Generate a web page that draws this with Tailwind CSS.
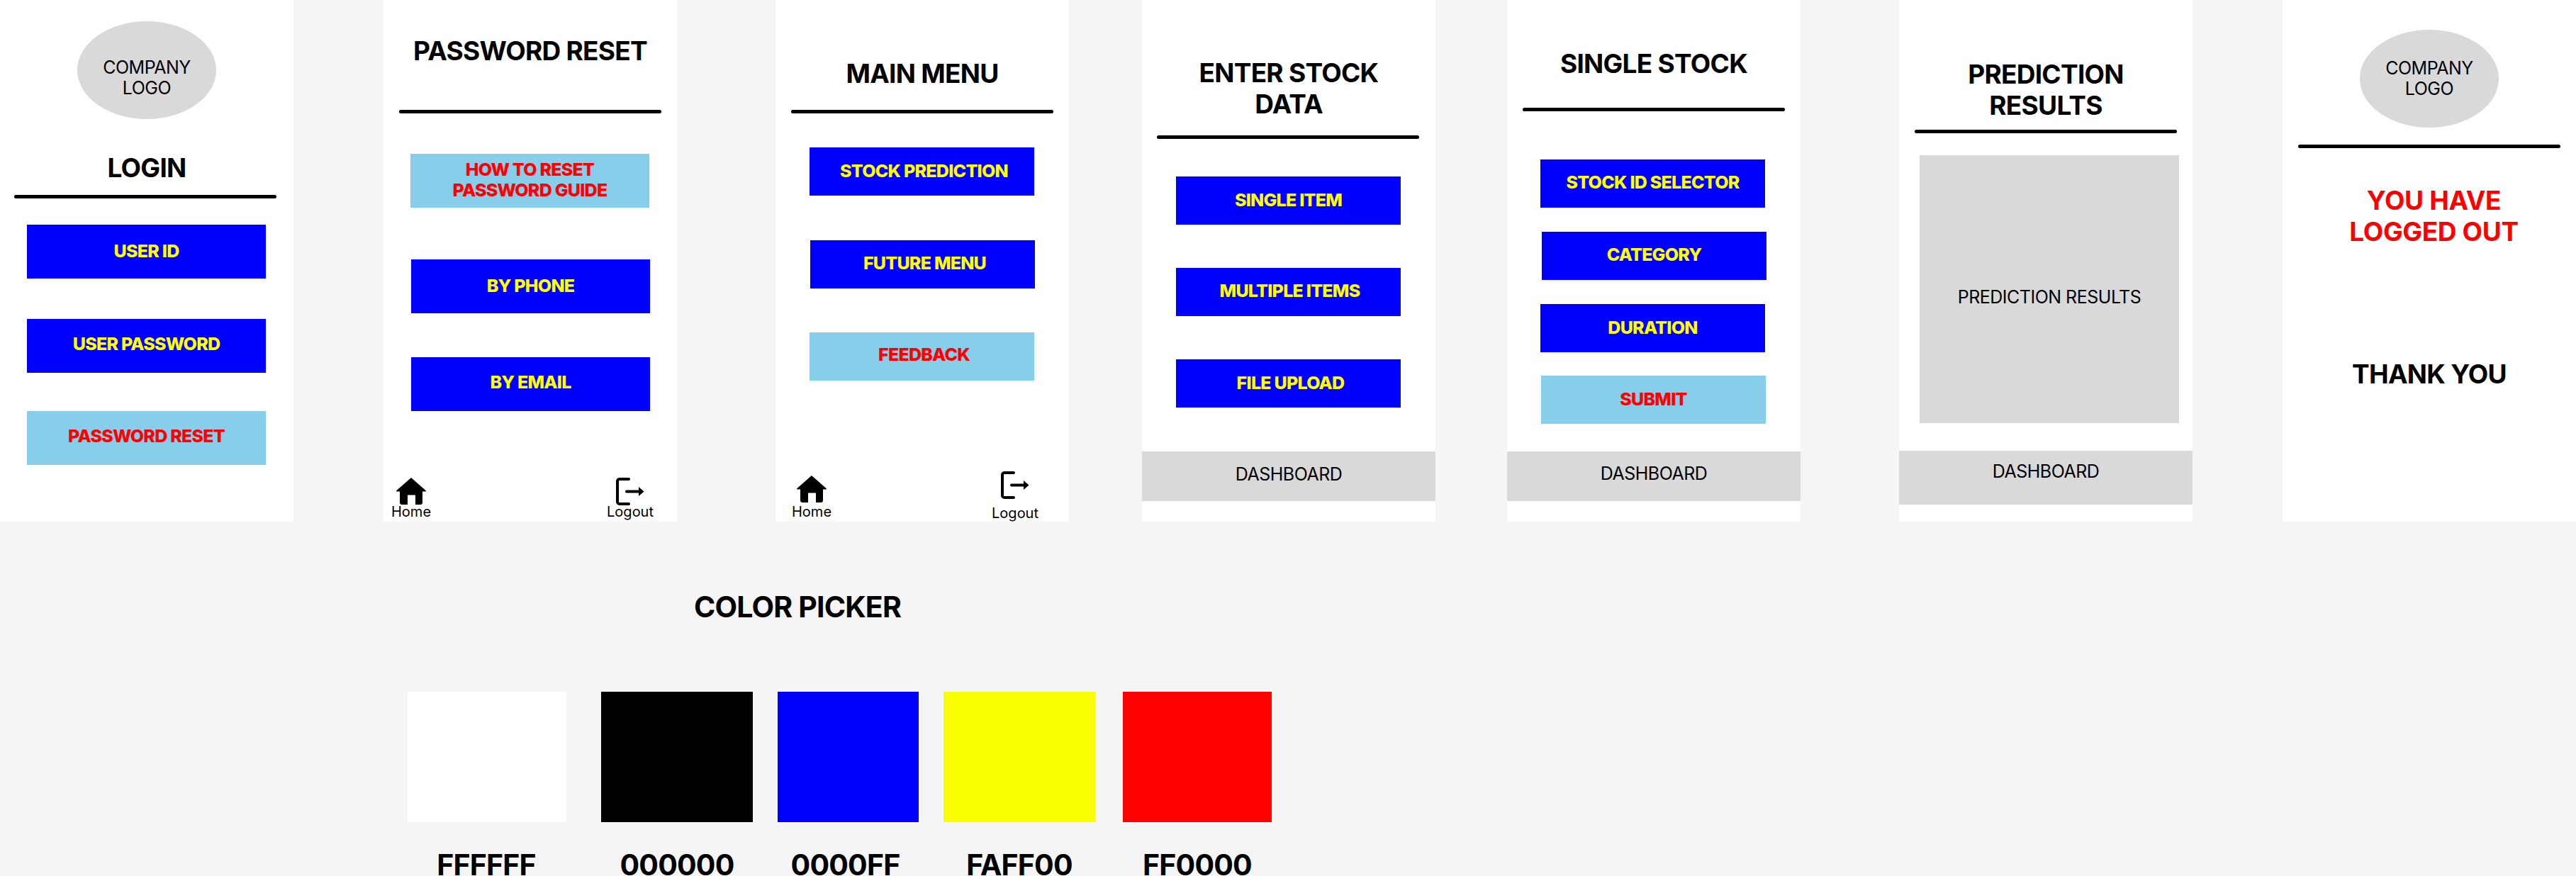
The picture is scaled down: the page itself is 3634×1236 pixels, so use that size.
<!DOCTYPE html>
<html lang="en">
<head>
  <meta charset="UTF-8" />
  <title>Stock App Wireframes</title>
  <script src="https://cdn.jsdelivr.net/npm/@tailwindcss/browser@4"></script>
</head>
<body class="bg-[#f5f5f5] font-['Inter',sans-serif] text-black overflow-hidden">
  <div class="w-[3634px] h-[1236px] overflow-hidden">

    <!-- Screens -->
    <div class="flex items-start h-[736px]">

      <!-- Login -->
      <section class="w-[414px] h-[736px] bg-white flex flex-col shrink-0">
        <div class="mt-[30px] ml-[109px] w-[196px] h-[138px] rounded-[50%] bg-[#d9d9d9] flex items-center justify-center text-center text-[25px] leading-[29px] tracking-[-0.02em] pt-[21px]">COMPANY<br />LOGO</div>
        <h1 class="mt-[47px] text-center text-[37px] leading-[44px] font-bold tracking-[-0.02em]">LOGIN</h1>
        <div class="mt-[16px] ml-[20px] w-[370px] h-[5px] rounded-full bg-black"></div>
        <div class="mt-[37px] ml-[38px] w-[337px] h-[76px] bg-[#0000ff] text-[#ffff00] text-[25px] font-extrabold tracking-[-0.03em] flex items-center justify-center">USER ID</div>
        <div class="mt-[57px] ml-[38px] w-[337px] h-[76px] bg-[#0000ff] text-[#ffff00] text-[25px] font-extrabold tracking-[-0.03em] flex items-center justify-center pb-[4px]">USER PASSWORD</div>
        <div class="mt-[54px] ml-[38px] w-[337px] h-[76px] bg-[#87ceeb] text-[#ff0000] text-[25px] font-extrabold tracking-[-0.03em] flex items-center justify-center pb-[4px]">PASSWORD RESET</div>
      </section>

      <!-- Password reset -->
      <section class="ml-[127px] w-[414px] h-[736px] bg-white flex flex-col shrink-0">
        <h1 class="mt-[50px] text-center text-[37px] leading-[44px] font-bold tracking-[-0.02em]">PASSWORD RESET</h1>
        <div class="mt-[61px] ml-[22px] w-[370px] h-[5px] rounded-full bg-black"></div>
        <div class="mt-[57px] ml-[38px] w-[337px] h-[76px] bg-[#87ceeb] text-[#ff0000] text-[25px] leading-[29px] font-extrabold tracking-[-0.03em] flex items-center justify-center text-center pb-[2px]">HOW TO RESET<br />PASSWORD GUIDE</div>
        <div class="mt-[73px] ml-[39px] w-[337px] h-[76px] bg-[#0000ff] text-[#ffff00] text-[25px] font-extrabold tracking-[-0.03em] flex items-center justify-center">BY PHONE</div>
        <div class="mt-[62px] ml-[39px] w-[337px] h-[76px] bg-[#0000ff] text-[#ffff00] text-[25px] font-extrabold tracking-[-0.03em] flex items-center justify-center pb-[4px]">BY EMAIL</div>
        <div class="mt-auto flex justify-between items-start pl-[11px] pr-[33px] pb-[2px]">
          <div class="flex flex-col items-center text-[20px] leading-[24px]">
            <svg class="w-[42px] h-[38px]" viewBox="0 0 42 38"><path fill="#000" d="M21 0 L41.5 18 Q42.5 19.5 41 19.5 H37 V35 a3 3 0 0 1 -3 3 H27 V24.5 H16 V38 H8 a3 3 0 0 1 -3 -3 V19.5 H1 Q-.5 19.5 .5 18Z"/></svg>
            <span class="-mt-[2px]">Home</span>
          </div>
          <div class="flex flex-col items-center text-[20px] leading-[24px]">
            <svg class="w-[40px] h-[39px]" viewBox="0 0 40 39"><path fill="none" stroke="#000" stroke-width="4" stroke-linecap="round" d="M18 2H5a3 3 0 0 0-3 3v29a3 3 0 0 0 3 3h13"/><path fill="none" stroke="#000" stroke-width="4" stroke-linecap="round" d="M15 19.5H33"/><path fill="#000" d="M32 13 L39.5 19.5 L32 26Z"/></svg>
            <span class="-mt-[3px]">Logout</span>
          </div>
        </div>
      </section>

      <!-- Main menu -->
      <section class="ml-[139px] w-[414px] h-[736px] bg-white flex flex-col shrink-0">
        <h1 class="mt-[82px] text-center text-[37px] leading-[44px] font-bold tracking-[-0.02em]">MAIN MENU</h1>
        <div class="mt-[29px] ml-[22px] w-[370px] h-[5px] rounded-full bg-black"></div>
        <div class="mt-[48px] ml-[48px] w-[317px] h-[68px] bg-[#0000ff] text-[#ffff00] text-[25px] font-extrabold tracking-[-0.03em] flex items-center justify-center pl-[6px]">STOCK PREDICTION</div>
        <div class="mt-[63px] ml-[49px] w-[317px] h-[68px] bg-[#0000ff] text-[#ffff00] text-[25px] font-extrabold tracking-[-0.03em] flex items-center justify-center pl-[6px] pb-[2px]">FUTURE MENU</div>
        <div class="mt-[62px] ml-[48px] w-[317px] h-[68px] bg-[#87ceeb] text-[#ff0000] text-[25px] font-extrabold tracking-[-0.03em] flex items-center justify-center pl-[6px] pb-[4px]">FEEDBACK</div>
        <div class="mt-auto flex justify-between items-start pl-[23px] pr-[43px]">
          <div class="flex flex-col items-center text-[20px] leading-[24px] -mt-[3px]">
            <svg class="w-[42px] h-[38px]" viewBox="0 0 42 38"><path fill="#000" d="M21 0 L41.5 18 Q42.5 19.5 41 19.5 H37 V35 a3 3 0 0 1 -3 3 H27 V24.5 H16 V38 H8 a3 3 0 0 1 -3 -3 V19.5 H1 Q-.5 19.5 .5 18Z"/></svg>
            <span class="mt-[1px]">Home</span>
          </div>
          <div class="flex flex-col items-center text-[20px] leading-[24px] -mt-[10px]">
            <svg class="w-[40px] h-[41px]" viewBox="0 0 40 39"><path fill="none" stroke="#000" stroke-width="4" stroke-linecap="round" d="M18 2H5a3 3 0 0 0-3 3v29a3 3 0 0 0 3 3h13"/><path fill="none" stroke="#000" stroke-width="4" stroke-linecap="round" d="M15 19.5H33"/><path fill="#000" d="M32 13 L39.5 19.5 L32 26Z"/></svg>
            <span class="mt-[7px]">Logout</span>
          </div>
        </div>
      </section>

      <!-- Enter stock data -->
      <section class="ml-[103px] w-[414px] h-[736px] bg-white flex flex-col shrink-0">
        <h1 class="mt-[81px] text-center text-[37px] leading-[44px] font-bold tracking-[-0.02em]">ENTER STOCK<br />DATA</h1>
        <div class="mt-[22px] ml-[21px] w-[370px] h-[5px] rounded-full bg-black"></div>
        <div class="mt-[53px] ml-[48px] w-[317px] h-[68px] bg-[#0000ff] text-[#ffff00] text-[25px] font-extrabold tracking-[-0.03em] flex items-center justify-center">SINGLE ITEM</div>
        <div class="mt-[61px] ml-[48px] w-[317px] h-[68px] bg-[#0000ff] text-[#ffff00] text-[25px] font-extrabold tracking-[-0.03em] flex items-center justify-center pl-[4px] pb-[2px]">MULTIPLE ITEMS</div>
        <div class="mt-[61px] ml-[48px] w-[317px] h-[68px] bg-[#0000ff] text-[#ffff00] text-[25px] font-extrabold tracking-[-0.03em] flex items-center justify-center pl-[6px]">FILE UPLOAD</div>
        <div class="mt-[62px] h-[70px] bg-[#d9d9d9] text-[25px] tracking-[-0.02em] flex items-center justify-center pb-[4px]">DASHBOARD</div>
      </section>

      <!-- Single stock -->
      <section class="ml-[101px] w-[414px] h-[736px] bg-white flex flex-col shrink-0">
        <h1 class="mt-[68px] text-center text-[37px] leading-[44px] font-bold tracking-[-0.02em]">SINGLE STOCK</h1>
        <div class="mt-[40px] ml-[22px] w-[370px] h-[5px] rounded-full bg-black"></div>
        <div class="mt-[68px] ml-[47px] w-[317px] h-[68px] bg-[#0000ff] text-[#ffff00] text-[25px] font-extrabold tracking-[-0.03em] flex items-center justify-center pb-[2px]">STOCK ID SELECTOR</div>
        <div class="mt-[34px] ml-[49px] w-[317px] h-[68px] bg-[#0000ff] text-[#ffff00] text-[25px] font-extrabold tracking-[-0.03em] flex items-center justify-center pb-[2px]">CATEGORY</div>
        <div class="mt-[34px] ml-[47px] w-[317px] h-[68px] bg-[#0000ff] text-[#ffff00] text-[25px] font-extrabold tracking-[-0.03em] flex items-center justify-center">DURATION</div>
        <div class="mt-[33px] ml-[48px] w-[317px] h-[68px] bg-[#87ceeb] text-[#ff0000] text-[25px] font-extrabold tracking-[-0.03em] flex items-center justify-center">SUBMIT</div>
        <div class="mt-[39px] h-[70px] bg-[#d9d9d9] text-[25px] tracking-[-0.02em] flex items-center justify-center pb-[6px]">DASHBOARD</div>
      </section>

      <!-- Prediction results -->
      <section class="ml-[139px] w-[414px] h-[736px] bg-white flex flex-col shrink-0">
        <h1 class="mt-[83px] text-center text-[37px] leading-[44px] font-bold tracking-[-0.02em]">PREDICTION<br />RESULTS</h1>
        <div class="mt-[12px] ml-[22px] w-[370px] h-[5px] rounded-full bg-black"></div>
        <div class="mt-[31px] ml-[29px] w-[366px] h-[378px] bg-[#d9d9d9] text-[25px] tracking-[-0.02em] flex items-center justify-center pt-[24px]">PREDICTION RESULTS</div>
        <div class="mt-[39px] h-[76px] bg-[#d9d9d9] text-[25px] tracking-[-0.02em] flex items-center justify-center pb-[16px]">DASHBOARD</div>
      </section>

      <!-- Logged out -->
      <section class="ml-[127px] w-[414px] h-[736px] bg-white flex flex-col shrink-0">
        <div class="mt-[42px] ml-[109px] w-[196px] h-[138px] rounded-[50%] bg-[#d9d9d9] flex items-center justify-center text-center text-[25px] leading-[29px] tracking-[-0.02em]">COMPANY<br />LOGO</div>
        <div class="mt-[24px] ml-[22px] w-[370px] h-[5px] rounded-full bg-black"></div>
        <h2 class="mt-[52px] pl-[13px] text-center text-[#ff0000] text-[37px] leading-[44px] font-bold tracking-[-0.01em]">YOU HAVE<br />LOGGED OUT</h2>
        <h2 class="mt-[157px] text-center text-[37px] leading-[44px] font-bold tracking-[-0.02em]">THANK YOU</h2>
      </section>
    </div>

    <!-- Color picker -->
    <div class="ml-[575px] w-[1219px]">
      <h2 class="mt-[96px] ml-[404px] w-[296px] whitespace-nowrap text-[41px] leading-[48px] font-bold tracking-[-0.02em]">COLOR PICKER</h2>
      <div class="mt-[96px] flex items-start">
        <div class="w-[224px] flex flex-col items-center"><div class="w-[224px] h-[184px] bg-white"></div><span class="mt-[45px] -ml-[2px] text-[41px] leading-[30px] font-bold tracking-[-0.02em]">FFFFFF</span></div>
        <div class="ml-[49px] w-[214px] flex flex-col items-center"><div class="w-[214px] h-[184px] bg-black"></div><span class="mt-[45px] text-[41px] leading-[30px] font-bold tracking-[-0.02em]">000000</span></div>
        <div class="ml-[35px] w-[199px] flex flex-col items-center"><div class="w-[199px] h-[184px] bg-[#0000ff]"></div><span class="mt-[45px] -ml-[8px] text-[41px] leading-[30px] font-bold tracking-[-0.02em]">0000FF</span></div>
        <div class="ml-[35px] w-[214px] flex flex-col items-center"><div class="w-[214px] h-[184px] bg-[#faff00]"></div><span class="mt-[45px] text-[41px] leading-[30px] font-bold tracking-[-0.02em]">FAFF00</span></div>
        <div class="ml-[39px] w-[210px] flex flex-col items-center"><div class="w-[210px] h-[184px] bg-[#ff0000]"></div><span class="mt-[45px] text-[41px] leading-[30px] font-bold tracking-[-0.02em]">FF0000</span></div>
      </div>
    </div>
  </div>
</body>
</html>
